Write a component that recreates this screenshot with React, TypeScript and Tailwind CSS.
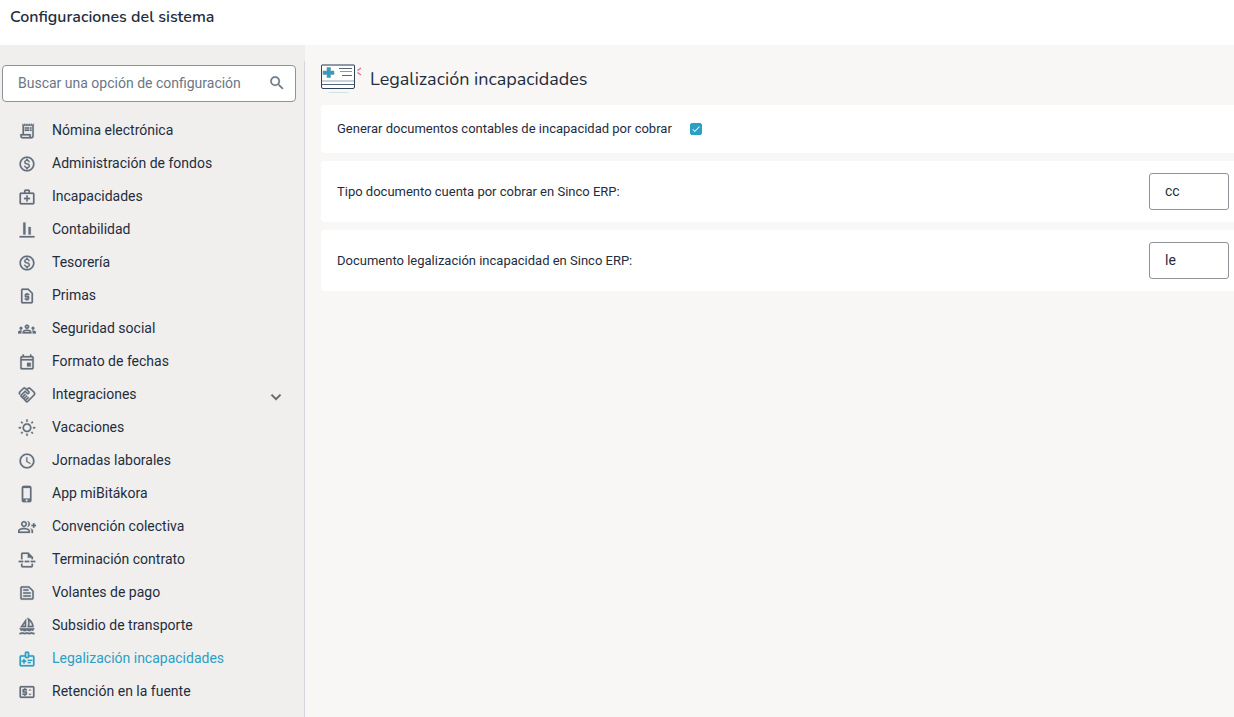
import { useState, type ReactNode } from "react";
import type { IconType } from "react-icons";
import {
  MdCheck,
  MdKeyboardArrowDown,
  MdOutlineAlignVerticalBottom,
  MdOutlineEvent,
  MdOutlineGroupAdd,
  MdOutlineGroups,
  MdOutlineHandshake,
  MdOutlineInsertPageBreak,
  MdOutlineMedicalInformation,
  MdOutlineMedicalServices,
  MdOutlineMonetizationOn,
  MdOutlinePhoneIphone,
  MdOutlinePriceChange,
  MdOutlineReceiptLong,
  MdOutlineRequestPage,
  MdOutlineSailing,
  MdOutlineSchedule,
  MdOutlineTextSnippet,
  MdOutlineWbSunny,
  MdSearch,
} from "react-icons/md";

type MenuItem = {
  label: string;
  icon: IconType;
  expandable?: boolean;
};

const menuItems: MenuItem[] = [
  { label: "Nómina electrónica", icon: MdOutlineReceiptLong },
  { label: "Administración de fondos", icon: MdOutlineMonetizationOn },
  { label: "Incapacidades", icon: MdOutlineMedicalServices },
  { label: "Contabilidad", icon: MdOutlineAlignVerticalBottom },
  { label: "Tesorería", icon: MdOutlineMonetizationOn },
  { label: "Primas", icon: MdOutlineRequestPage },
  { label: "Seguridad social", icon: MdOutlineGroups },
  { label: "Formato de fechas", icon: MdOutlineEvent },
  { label: "Integraciones", icon: MdOutlineHandshake, expandable: true },
  { label: "Vacaciones", icon: MdOutlineWbSunny },
  { label: "Jornadas laborales", icon: MdOutlineSchedule },
  { label: "App miBitákora", icon: MdOutlinePhoneIphone },
  { label: "Convención colectiva", icon: MdOutlineGroupAdd },
  { label: "Terminación contrato", icon: MdOutlineInsertPageBreak },
  { label: "Volantes de pago", icon: MdOutlineTextSnippet },
  { label: "Subsidio de transporte", icon: MdOutlineSailing },
  { label: "Legalización incapacidades", icon: MdOutlineMedicalInformation },
  { label: "Retención en la fuente", icon: MdOutlinePriceChange },
];

export default function App() {
  return (
    <div className="flex min-h-screen flex-col bg-white font-['Roboto',sans-serif] text-[#1f2d3d]">
      <header className="h-[45px] px-2.5 pt-[5px]">
        <h1 className="font-['Nunito','Open_Sans',sans-serif] text-base leading-6 font-semibold">
          Configuraciones del sistema
        </h1>
      </header>
      <div className="flex flex-1 bg-[#f8f7f6]">
        <Sidebar active="Legalización incapacidades" />
        <main className="min-w-0 flex-1 pt-4 pl-4">
          <SettingsPanel />
        </main>
      </div>
    </div>
  );
}

function Sidebar({ active }: { active: string }) {
  return (
    <aside className="flex w-[305px] shrink-0 flex-col bg-[#f0efee] pt-4">
      <div className="flex-1 border-r border-[#d3d6da] pt-1">
        <div className="mr-2 ml-0.5 flex h-[37px] items-center rounded border border-[#8f9296] bg-white pr-[9px] pl-[15px]">
          <input
            type="search"
            aria-label="Buscar una opción de configuración"
            placeholder="Buscar una opción de configuración"
            className="min-w-0 flex-1 pb-0.5 text-sm outline-none placeholder:text-[#6b7785]"
          />
          <MdSearch
            aria-hidden="true"
            className="mb-0.5 size-[18px] stroke-[0.3] text-[#6b7785] [&>[fill=none]]:stroke-none"
          />
        </div>

        <nav aria-label="Configuraciones" className="pt-[11px]">
          <ul>
            {menuItems.map((item) => {
              const Icon = item.icon;
              const isActive = item.label === active;
              return (
                <li key={item.label}>
                  <a
                    href="#"
                    aria-current={isActive ? "page" : undefined}
                    className={`flex h-[33px] items-center px-[18px] text-sm ${
                      isActive ? "text-[#2b9fc4]" : ""
                    }`}
                  >
                    <Icon
                      aria-hidden="true"
                      className={`mt-0.5 mr-4 size-[18px] stroke-[0.3] [&>[fill=none]]:stroke-none ${
                        isActive ? "text-[#2b9fc4]" : "text-[#626e7b]"
                      }`}
                    />
                    <span className="flex-1">{item.label}</span>
                    {item.expandable && (
                      <MdKeyboardArrowDown
                        aria-hidden="true"
                        className="mt-1.5 size-5 stroke-[0.5] text-[#666666] [&>[fill=none]]:stroke-none"
                      />
                    )}
                  </a>
                </li>
              );
            })}
          </ul>
        </nav>
      </div>
    </aside>
  );
}

function SettingsPanel() {
  const [generate, setGenerate] = useState(true);

  return (
    <>
      <div className="flex h-11 items-start">
        <MedicalCardIllustration className="mt-0.5 h-8 w-[49px] shrink-0" />
        <h2 className="pt-1.5 font-['Nunito','Open_Sans',sans-serif] text-lg leading-6">
          Legalización incapacidades
        </h2>
      </div>

      <div className="flex flex-col gap-2 text-[13px]">
        <SettingCard className="h-12">
          <label htmlFor="generate">
            Generar documentos contables de incapacidad por cobrar
          </label>
          <span className="ml-4.5 grid size-3 place-items-center">
            <input
              id="generate"
              type="checkbox"
              checked={generate}
              onChange={(e) => setGenerate(e.target.checked)}
              className="col-start-1 row-start-1 size-3 appearance-none rounded-xs border border-[#2b9fc4] bg-white checked:bg-[#2b9fc4]"
            />
            {generate && (
              <MdCheck
                aria-hidden="true"
                className="pointer-events-none col-start-1 row-start-1 size-2.5 text-white"
              />
            )}
          </span>
        </SettingCard>
        <TextSetting
          id="receivable"
          label="Tipo documento cuenta por cobrar en Sinco ERP:"
          value="cc"
        />
        <TextSetting
          id="legalization"
          label="Documento legalización incapacidad en Sinco ERP:"
          value="le"
        />
      </div>
    </>
  );
}

function SettingCard({
  className,
  children,
}: {
  className: string;
  children: ReactNode;
}) {
  return (
    <div
      className={`flex items-center rounded-l bg-white pr-[5px] pl-4 ${className}`}
    >
      {children}
    </div>
  );
}

function TextSetting({
  id,
  label,
  value,
}: {
  id: string;
  label: string;
  value: string;
}) {
  return (
    <SettingCard className="h-[61px] justify-between">
      <label htmlFor={id}>{label}</label>
      <input
        id={id}
        type="text"
        defaultValue={value}
        className="h-[37px] w-20 rounded-[3px] border border-[#8f9296] bg-white px-[15px] pb-0.5 text-sm outline-none"
      />
    </SettingCard>
  );
}

function MedicalCardIllustration({ className }: { className?: string }) {
  return (
    <svg
      viewBox="0 0 49 32"
      fill="none"
      aria-hidden="true"
      className={className}
    >
      <rect x="0.5" y="1.5" width="33" height="24" rx="1.5" fill="#fff" />
      <path d="M1 17h32v2H1z" fill="#c9d1d9" />
      <path d="M1 21.5h32" stroke="#53667a" />
      <rect
        x="0.5"
        y="1.5"
        width="33"
        height="24"
        rx="1.5"
        stroke="#2f4358"
      />
      <path d="M1 1h32v2H1z" fill="#8d9aa6" />
      <path
        d="M6 4.5h3.5v3.5H13v3.5H9.5v3H6v-3H2V8h4z"
        fill="#2b9fc4"
        stroke="#7d92a3"
        strokeWidth="0.6"
      />
      <path d="M18 5.5h13M21 12.5h10" stroke="#53667a" />
      <path d="M19 8.5h12" stroke="#8d9aa6" />
      <path
        d="M36.5 7.5 40 5M36.5 9.5 40 12"
        stroke="#e0668a"
        strokeWidth="1.2"
      />
      <path d="M8 29.5h19" stroke="#d5dfe9" strokeLinecap="round" />
    </svg>
  );
}
